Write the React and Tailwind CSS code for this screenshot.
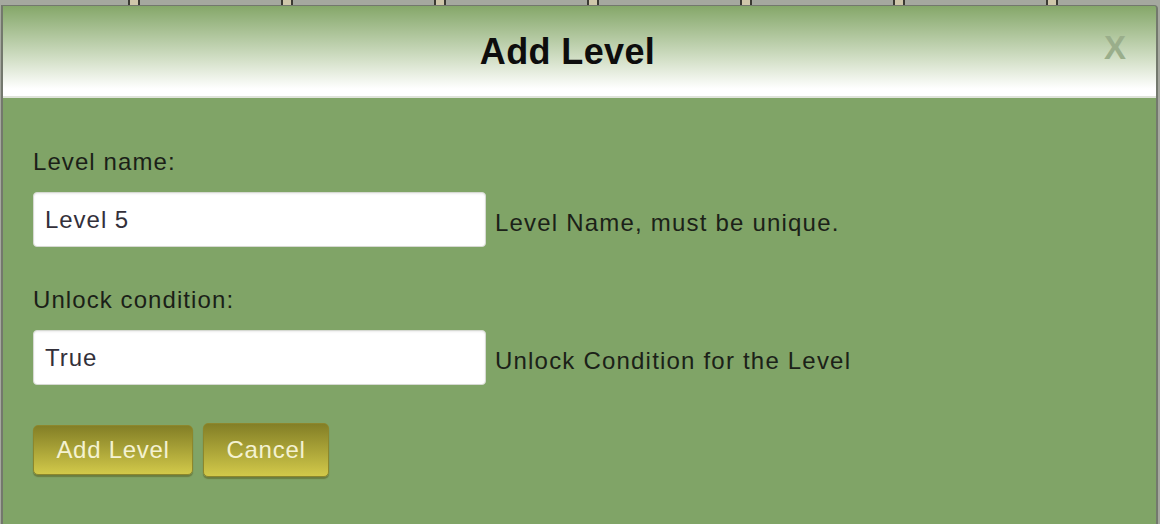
import React from 'react'

const COLS = [0, 1, 2, 3, 4, 5, 6]

function Field({ label, value, hint, first }) {
  return (
    <div className={first ? '' : 'mt-[39px]'}>
      <div className="text-[24px] leading-[28px] tracking-[0.045em] text-[#1b1f18]">{label}</div>
      <div className="mt-[16px] flex items-end">
        <div className="h-[55px] w-[453px] flex items-center px-[11px] bg-white rounded-[4px] border border-[#d6d9d2] shadow-[inset_0_1px_2px_rgba(0,0,0,0.08)]">
          <span className="text-[24px] leading-[28px] tracking-[0.04em] text-[#33303a]">{value}</span>
        </div>
        <span className="ml-[9px] pb-[10px] text-[24px] leading-[28px] tracking-[0.05em] text-[#1b2118]">
          {hint}
        </span>
      </div>
    </div>
  )
}

function OliveButton({ children, className }) {
  return (
    <button
      className={`${className} flex items-center justify-center rounded-[5px] border border-[#8d872c] bg-linear-to-b from-[#837f26] to-[#d2c94a] text-[24px] leading-[28px] tracking-[0.03em] text-[#f4f2d2] shadow-[0_2px_1px_rgba(80,80,20,0.45)]`}
    >
      {children}
    </button>
  )
}

export default function App() {
  return (
    <div
      className="relative w-[1160px] h-[524px] overflow-hidden bg-[#a5a89f]"
      style={{ fontFamily: '"Liberation Sans", Arial, sans-serif' }}
    >
      {/* table header behind the dialog */}
      <div className="flex h-[5px] pl-[128px] gap-[141px]">
        {COLS.map((c) => (
          <div key={c} className="w-[12px] h-full border-x-2 border-[#3b3a33] bg-[#cfc7aa]" />
        ))}
      </div>

      {/* dialog */}
      <div className="absolute left-[1px] top-[5px] w-[1157px] h-[540px] border-l-2 border-r-2 border-t border-[#73786d] rounded-tr-[4px] bg-[#80a467] overflow-hidden">
        <div className="relative h-[92px] flex items-center justify-center pr-[24px] bg-linear-to-b from-[#85a769] via-[#d4e0c8] via-60% to-white to-92% border-b-2 border-[#dfe3da]">
          <h1 className="text-[36px] leading-[40px] font-bold tracking-[0.01em] text-[#0d0d0d] mt-[2px]">Add Level</h1>
          <span className="absolute right-[30px] top-[24px] text-[33px] leading-[36px] font-bold text-[#9aae8b]">X</span>
        </div>

        <div className="pl-[30px] pt-[50px]">
          <Field first label="Level name:" value="Level 5" hint="Level Name, must be unique." />
          <Field label="Unlock condition:" value="True" hint="Unlock Condition for the Level" />

          <div className="mt-[38px] flex items-center gap-[10px]">
            <OliveButton className="w-[160px] h-[50px]">Add Level</OliveButton>
            <OliveButton className="w-[126px] h-[54px]">Cancel</OliveButton>
          </div>
        </div>
      </div>
    </div>
  )
}
